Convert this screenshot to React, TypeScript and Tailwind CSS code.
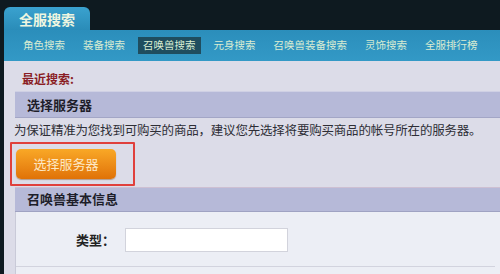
import React from 'react';

const navItems = ['角色搜索', '装备搜索', '召唤兽搜索', '元身搜索', '召唤兽装备搜索', '灵饰搜索', '全服排行榜'];

export default function App() {
  return (
    <div
      className="w-[500px] h-[274px] overflow-hidden bg-[#0e1a20] pl-[4px] flex flex-col"
      style={{ fontFamily: '"Noto Sans CJK SC", "Noto Sans", sans-serif' }}
    >
      {/* Top tab */}
      <div className="h-[30px] flex items-end shrink-0">
        <div className="w-[86px] h-[23px] rounded-t-[6px] bg-gradient-to-b from-[#3aa2cf] to-[#2a8cb8] flex items-center justify-center text-[14px] font-bold text-[#eef6e0] leading-none">
          全服搜索
        </div>
      </div>

      {/* Nav bar */}
      <div className="h-[31px] shrink-0 bg-gradient-to-b from-[#2b8ebb] to-[#3399c6] flex items-center pl-[14px] gap-[8px] text-[10.5px] text-[#d9ecd2] leading-none whitespace-nowrap">
        {navItems.map((item, i) => (
          <div
            key={item}
            className={`px-[5px] h-[17px] flex items-center ${i === 2 ? 'bg-[#1f4d5f]' : ''}`}
          >
            {item}
          </div>
        ))}
      </div>

      {/* Content */}
      <div className="flex-1 bg-[#dcdce8] flex flex-col">
        <div className="h-[30px] pl-[18px] pt-[12px] text-[12px] font-bold text-[#8a1c24] leading-none">最近搜索:</div>

        <div className="ml-[11px] h-[27px] bg-[#b6b9d8] border-t border-[#cfd0e4] border-b border-b-[#a3a6c6] flex items-center pl-[12px] text-[13px] font-bold text-[#1e1e2a]">
          选择服务器
        </div>

        <div className="pl-[10px] pt-[6px] text-[12.5px] text-[#2e2e36] leading-none tracking-[-0.2px]">
          为保证精准为您找到可购买的商品，建议您先选择将要购买商品的帐号所在的服务器。
        </div>

        <div className="ml-[6px] mt-[5px] w-[125px] h-[44px] border-2 border-[#e0403c] rounded-[1px] flex items-center pl-[4px]">
          <div className="w-[100px] h-[30px] rounded-[5px] bg-gradient-to-b from-[#f9a826] to-[#e07206] flex items-center justify-center text-[13px] text-[#fde8c4] shadow-[0_1px_1px_rgba(120,60,0,0.4)]">
            选择服务器
          </div>
        </div>

        <div className="ml-[11px] mt-[1px] h-[25px] bg-[#b6b9d8] border-t border-[#cdbfd2] border-b border-b-[#9fa2c2] flex items-center pl-[12px] text-[13px] font-bold text-[#1e1e2a]">
          召唤兽基本信息
        </div>

        <div className="ml-[11px] flex-1 bg-[#eceef5] border-l border-[#c9cad8] flex flex-col">
          <div className="flex items-center h-[54px] pt-[2px]">
            <div className="w-[109px] text-right text-[13px] font-bold text-[#222] pr-[10px]">类型：</div>
            <div className="w-[163px] h-[24px] bg-white border border-[#d2d3dc]"></div>
          </div>
          <div className="mr-[5px] border-t border-[#d2d3de]"></div>
        </div>
      </div>
    </div>
  );
}
